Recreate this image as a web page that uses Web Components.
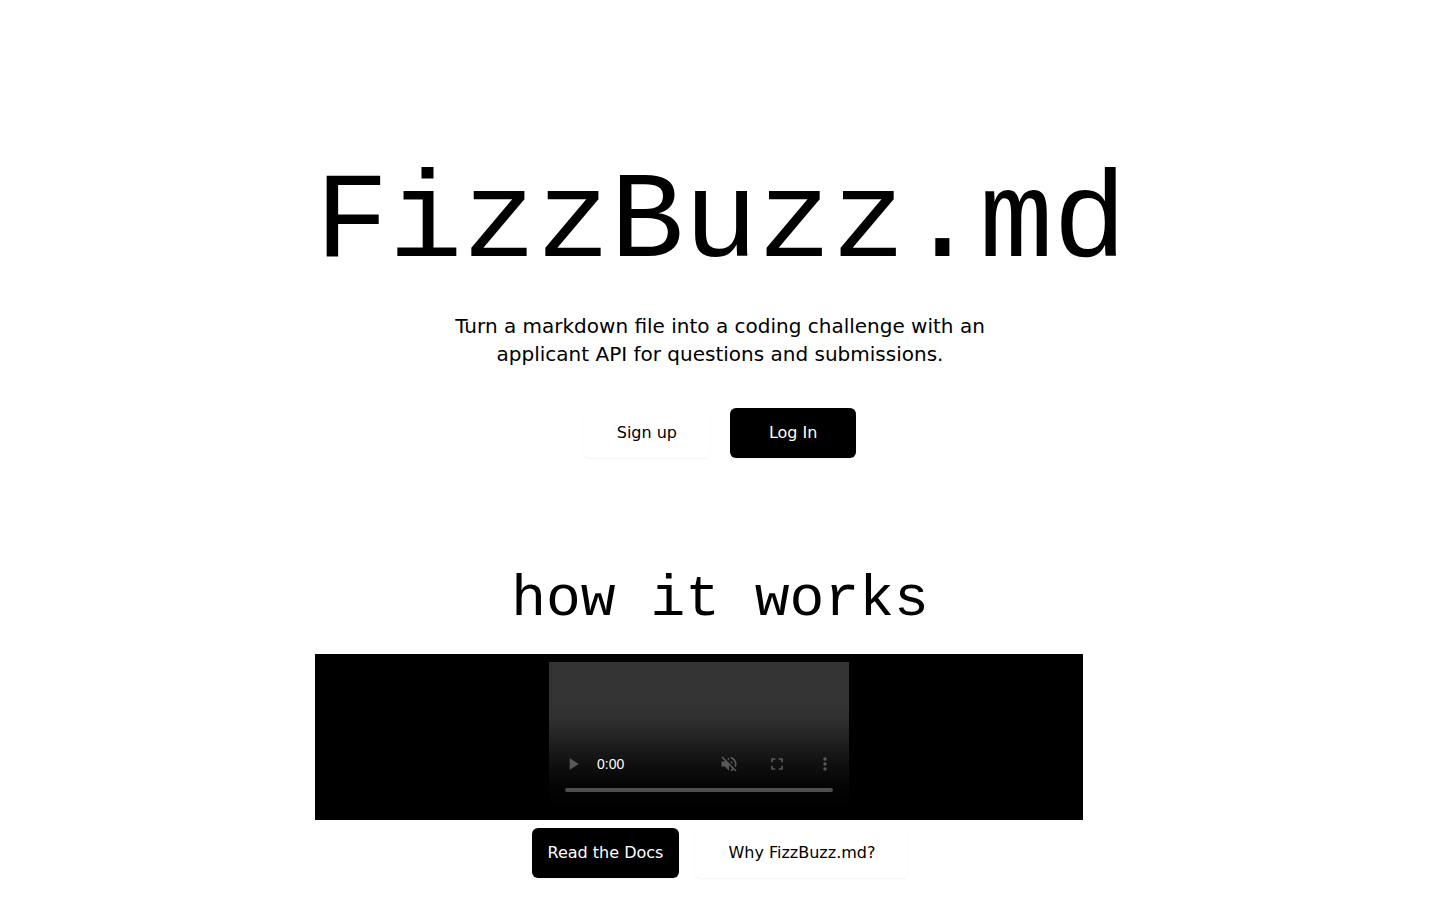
<!DOCTYPE html>
<html lang="en">
<head>
<meta charset="utf-8">
<meta name="viewport" content="width=device-width, initial-scale=1">
<title>FizzBuzz.md</title>
<style>
    body {
        margin: 0;
        background: #fff;
        color: #000;
        font-family: "DejaVu Sans", sans-serif;
        font-size: 16px;
        line-height: 24px;
    }
</style>
</head>
<body>
<landing-page>
    <hero-section heading="FizzBuzz.md">
        Turn a markdown file into a coding challenge with an applicant API for questions and submissions.
        <link-button slot="actions" href="#signup">Sign up</link-button>
        <link-button slot="actions" href="#login" dark>Log In</link-button>
    </hero-section>
    <how-section heading="how it works">
        <video-player></video-player>
        <link-button slot="actions" href="#docs" dark compact>Read the Docs</link-button>
        <link-button slot="actions" href="#why">Why FizzBuzz.md?</link-button>
    </how-section>
</landing-page>

<script>
    function render(el, html) {
        const shadow = el.attachShadow({ mode: 'open' });
        const template = document.createElement('template');
        template.innerHTML = html;
        shadow.appendChild(template.content.cloneNode(true));
        return shadow;
    }

    class LandingPage extends HTMLElement {
        constructor() {
            super();
            render(this, `
                <style>
                    :host {
                        display: flex;
                        justify-content: center;
                        padding: 160px 16px 20px;
                    }
                    main {
                        width: 100%;
                        max-width: 810px;
                    }
                </style>
                <main><slot></slot></main>
            `);
        }
    }

    class LinkButton extends HTMLElement {
        constructor() {
            super();
            const shadow = render(this, `
                <style>
                    :host { display: block; }
                    a {
                        display: block;
                        padding: 12px 32px;
                        border: 1px solid transparent;
                        border-radius: 6px;
                        background: #fff;
                        color: #000;
                        text-align: center;
                        text-decoration: none;
                        white-space: nowrap;
                        box-shadow: 0 1px 2px rgba(0,0,0,0.05);
                    }
                    a:hover { background: #f5f5f5; }
                    :host([dark]) a {
                        background: #000;
                        color: #fff;
                    }
                    :host([dark]) a:hover { background: #222; }
                    :host([compact]) a { padding: 12px 15px; }
                </style>
                <a><slot></slot></a>
            `);
            shadow.querySelector('a').href = this.getAttribute('href');
        }
    }

    class HeroSection extends HTMLElement {
        constructor() {
            super();
            const shadow = render(this, `
                <style>
                    :host { display: block; text-align: center; }
                    h1 {
                        margin: 0;
                        font: 400 123px/128px "Liberation Mono", monospace;
                    }
                    p {
                        max-width: 576px;
                        margin: 24px auto 0;
                        font-size: 20px;
                        line-height: 28px;
                    }
                    .actions {
                        display: grid;
                        grid-template-columns: 1fr 1fr;
                        gap: 20px;
                        width: fit-content;
                        margin: 40px auto 0;
                    }
                </style>
                <h1></h1>
                <p><slot></slot></p>
                <div class="actions"><slot name="actions"></slot></div>
            `);
            shadow.querySelector('h1').textContent = this.getAttribute('heading');
        }
    }

    class HowSection extends HTMLElement {
        constructor() {
            super();
            const shadow = render(this, `
                <style>
                    :host { display: block; margin-top: 112px; }
                    h2 {
                        margin: 0 0 24px;
                        font: 400 58px/60px "Liberation Mono", monospace;
                        text-align: center;
                    }
                    .actions {
                        display: flex;
                        justify-content: center;
                        gap: 16px;
                        margin-top: 8px;
                    }
                </style>
                <h2></h2>
                <slot></slot>
                <div class="actions"><slot name="actions"></slot></div>
            `);
            shadow.querySelector('h2').textContent = this.getAttribute('heading');
        }
    }

    class VideoPlayer extends HTMLElement {
        constructor() {
            super();
            render(this, `
                <style>
                    :host {
                        display: flex;
                        justify-content: center;
                        max-width: 768px;
                        box-sizing: border-box;
                        padding: 8px;
                        background: #000;
                    }
                    .player {
                        display: grid;
                        grid-template-columns: 300px;
                    }
                    video, .controls { grid-area: 1 / 1; }
                    video {
                        width: 300px;
                        height: 150px;
                        background: linear-gradient(#333 0%, #333 30%, #2f2f2f 38%, #252525 49%, #191919 59%, #0d0d0d 71%, #040404 84%, #000 96%);
                    }
                    .controls {
                        display: flex;
                        flex-direction: column;
                        justify-content: flex-end;
                        padding-bottom: 20px;
                    }
                    .row {
                        display: flex;
                        align-items: center;
                    }
                    .time {
                        flex: 1;
                        color: #fff;
                        font: 14px/48px "Liberation Sans", sans-serif;
                    }
                    button {
                        display: flex;
                        align-items: center;
                        justify-content: center;
                        width: 48px;
                        height: 48px;
                        padding: 0;
                        border: 0;
                        background: none;
                        color: #fff;
                    }
                    svg {
                        width: 20px;
                        height: 20px;
                        fill: currentColor;
                        opacity: 0.3;
                    }
                    input {
                        appearance: none;
                        height: 4px;
                        margin: 0 16px;
                        border-radius: 2px;
                        background: #4f4f4f;
                    }
                    input::-webkit-slider-thumb {
                        appearance: none;
                        width: 0;
                        height: 0;
                    }
                </style>
                <div class="player">
                    <video muted></video>
                    <div class="controls">
                        <div class="row">
                            <button aria-label="play" disabled>
                                <svg viewBox="0 0 24 24"><path d="M8 5v14l11-7z"/></svg>
                            </button>
                            <span class="time">0:00</span>
                            <button aria-label="unmute" disabled>
                                <svg viewBox="0 0 24 24"><path d="M4.34 2.93 2.93 4.34 7.29 8.7 7 9H3v6h4l5 5v-6.59l4.18 4.18c-.65.49-1.38.88-2.18 1.11v2.06c1.34-.3 2.57-.92 3.61-1.75l2.05 2.05 1.41-1.41L4.34 2.93zM19 12c0 .82-.15 1.61-.41 2.34l1.53 1.53c.56-1.17.88-2.48.88-3.87 0-4.28-2.99-7.86-7-8.77v2.06c2.89.86 5 3.54 5 6.71zm-7-8-1.88 1.88L12 7.76V4zm4.5 8c0-1.77-1.02-3.29-2.5-4.03v1.79l2.48 2.48c.01-.08.02-.16.02-.24z"/></svg>
                            </button>
                            <button aria-label="enter full screen" disabled>
                                <svg viewBox="0 0 24 24"><path d="M7 14H5v5h5v-2H7v-3zm-2-4h2V7h3V5H5v5zm12 7h-3v2h5v-5h-2v3zM14 5v2h3v3h2V5h-5z"/></svg>
                            </button>
                            <button aria-label="show more media controls" disabled>
                                <svg viewBox="0 0 24 24"><path d="M12 8c1.100 0 2-.9 2-2s-.9-2-2-2-2 .9-2 2 .9 2 2 2zm0 2c-1.100 0-2 .9-2 2s.9 2 2 2 2-.9 2-2-.9-2-2-2zm0 6c-1.100 0-2 .9-2 2s.9 2 2 2 2-.9 2-2-.9-2-2-2z"/></svg>
                            </button>
                        </div>
                        <input type="range" min="0" max="100" value="0" aria-label="video time scrubber" disabled>
                    </div>
                </div>
            `);
        }
    }

    customElements.define('landing-page', LandingPage);
    customElements.define('link-button', LinkButton);
    customElements.define('hero-section', HeroSection);
    customElements.define('how-section', HowSection);
    customElements.define('video-player', VideoPlayer);
</script>
</body>
</html>
